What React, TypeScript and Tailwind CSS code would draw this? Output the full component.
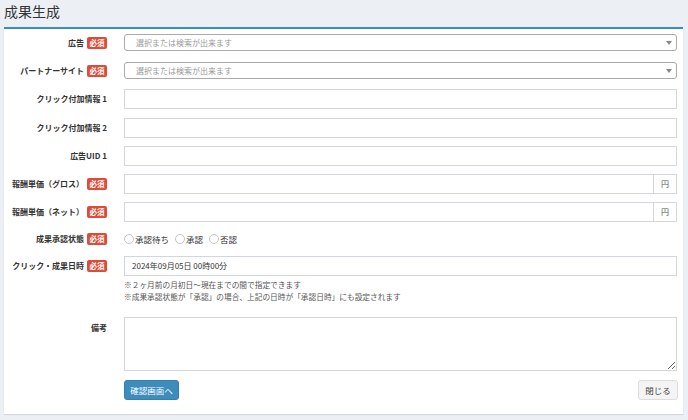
import React from "react";

const jp = "font-['Noto_Sans_CJK_JP','Noto_Sans',sans-serif]";

function Badge() {
  return (
    <span className="flex h-[12px] shrink-0 items-center rounded-[2px] bg-[#dd4b39] px-[2.5px] text-[7.5px] font-bold leading-none whitespace-nowrap text-white">
      必須
    </span>
  );
}

function Label({ text, required, top }: { text: string; required?: boolean; top?: boolean }) {
  return (
    <div
      className={`flex w-[103px] shrink-0 justify-end gap-[3px] ${top ? "items-start pt-[5px]" : "items-center"}`}
    >
      <span className="text-[8px] font-bold leading-[12px] whitespace-nowrap text-[#333]">{text}</span>
      {required && <Badge />}
    </div>
  );
}

function Row({ className, children }: { className?: string; children: React.ReactNode }) {
  return <div className={`flex ${className ?? ""}`}>{children}</div>;
}

function Select() {
  return (
    <div className="flex h-[17px] flex-1 items-center justify-between rounded-[3px] border border-[#aaa] bg-white pl-[11px] pr-[4px]">
      <span className="text-[8px] leading-none text-[#999]">選択または検索が出来ます</span>
      <span className="h-0 w-0 border-l-[3px] border-r-[3px] border-t-[4px] border-l-transparent border-r-transparent border-t-[#888]" />
    </div>
  );
}

function Input({ value }: { value?: string }) {
  return (
    <div className="flex h-[20px] flex-1 items-center border border-[#d2d6de] bg-white pl-[7px] text-[8px] leading-none text-[#333]">
      {value}
    </div>
  );
}

function YenInput() {
  return (
    <div className="flex h-[20px] flex-1">
      <div className="flex-1 border border-[#d2d6de] bg-white" />
      <div className="flex w-[23px] items-center justify-center border border-l-0 border-[#d2d6de] bg-white text-[8px] text-[#555]">
        円
      </div>
    </div>
  );
}

function Radio({ text }: { text: string }) {
  return (
    <label className="flex items-center gap-[1px] text-[8.5px] leading-none text-[#333]">
      <span className="h-[10px] w-[10px] rounded-full border border-[#c4c4c4] bg-white" />
      {text}
    </label>
  );
}

export default function App() {
  return (
    <div className={`min-h-screen w-[688px] bg-[#ecf0f5] ${jp}`}>
      <h1 className="h-[27px] pl-[4px] pt-[1px] text-[14px] font-normal leading-[20px] text-[#333]">成果生成</h1>
      <div className="ml-[4px] mr-[5px] border-t-2 border-[#3c8dbc] bg-white pb-[14px] pr-[6px] pt-[5px] shadow-[0_1px_1px_rgba(0,0,0,0.1)]">
        <Row className="gap-[17px]">
          <Label text="広告" required />
          <Select />
        </Row>
        <Row className="mt-[11px] gap-[17px]">
          <Label text="パートナーサイト" required />
          <Select />
        </Row>
        <Row className="mt-[10px] gap-[17px]">
          <Label text="クリック付加情報 1" />
          <Input />
        </Row>
        <Row className="mt-[9px] gap-[17px]">
          <Label text="クリック付加情報 2" />
          <Input />
        </Row>
        <Row className="mt-[8px] gap-[17px]">
          <Label text="広告UID 1" />
          <Input />
        </Row>
        <Row className="mt-[8px] gap-[17px]">
          <Label text="報酬単価（グロス）" required />
          <YenInput />
        </Row>
        <Row className="mt-[8px] gap-[17px]">
          <Label text="報酬単価（ネット）" required />
          <YenInput />
        </Row>
        <Row className="mt-[7px] h-[20px] gap-[17px]">
          <Label text="成果承認状態" required />
          <div className="flex items-center gap-[6px]">
            <Radio text="承認待ち" />
            <Radio text="承認" />
            <Radio text="否認" />
          </div>
        </Row>
        <Row className="mt-[7px] gap-[17px]">
          <Label text="クリック・成果日時" required />
          <Input value="2024年09月05日 00時00分" />
        </Row>
        <div className="ml-[120px] mt-[3px] text-[7.7px] leading-[12px] text-[#555]">
          <p>※２ヶ月前の月初日〜現在までの間で指定できます</p>
          <p>※成果承認状態が「承認」の場合、上記の日時が「承認日時」にも設定されます</p>
        </div>
        <Row className="mt-[14px] gap-[17px]">
          <Label text="備考" top />
          <textarea className="block h-[54px] flex-1 border border-[#d2d6de] bg-white" />
        </Row>
        <div className="ml-[120px] mt-[9px] flex justify-between">
          <button
            type="button"
            className="h-[20px] w-[55px] rounded-[3px] border border-[#367fa9] bg-[#3c8dbc] text-[8.5px] leading-none text-white"
          >
            確認画面へ
          </button>
          <button
            type="button"
            className="mr-[-1px] h-[20px] w-[40px] rounded-[3px] border border-[#ddd] bg-[#f4f4f4] text-[8.5px] leading-none text-[#444]"
          >
            閉じる
          </button>
        </div>
      </div>
    </div>
  );
}
